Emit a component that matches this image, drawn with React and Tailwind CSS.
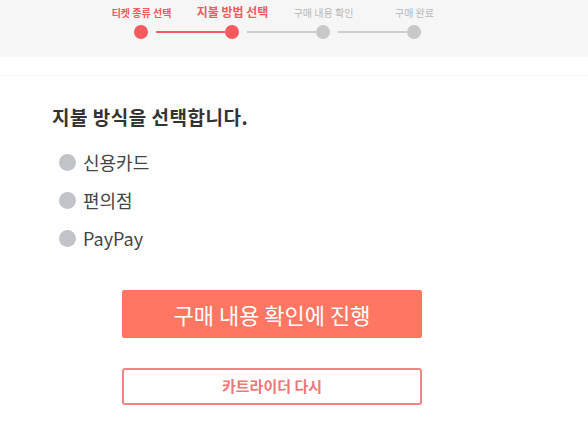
import React, { useState } from "react";

const steps = [
    { label: "티켓 종류 선택", state: "done" },
    { label: "지불 방법 선택", state: "current" },
    { label: "구매 내용 확인", state: "todo" },
    { label: "구매 완료", state: "todo" },
];

const methods = ["신용카드", "편의점", "PayPay"];

const Stepper = () => (
    <div className="h-[57px] bg-[#f6f6f6] pl-[96px] pt-[3px]">
        <div className="flex">
            {steps.map((step) => (
                <div key={step.label} className="w-[91px] h-[18px] flex items-center justify-center">
                    <span
                        className={
                            step.state === "current"
                                ? "text-[12px] font-bold text-[#f25a5f]"
                                : step.state === "done"
                                ? "text-[10px] font-semibold text-[#f25a5f]"
                                : "text-[10px] text-[#b8b8b8]"
                        }
                    >
                        {step.label}
                    </span>
                </div>
            ))}
        </div>
        <div className="flex items-center mt-[4px] pl-[38px]">
            {steps.map((step, i) => (
                <div key={step.label} className="flex items-center">
                    <div
                        className={
                            "w-[14px] h-[14px] rounded-full " +
                            (step.state === "todo" ? "bg-[#c8c8c8]" : "bg-[#f55a5e]")
                        }
                    />
                    {i < steps.length - 1 && (
                        <div
                            className={
                                "ml-[8px] w-[69px] h-[2px] " +
                                (steps[i + 1].state === "todo" ? "bg-[#cccccc]" : "bg-[#f55a5e]")
                            }
                        />
                    )}
                </div>
            ))}
        </div>
    </div>
);

export default function App() {
    const [method, setMethod] = useState(null);

    return (
        <div
            className="w-[588px] h-[427px] bg-white overflow-hidden"
            style={{ fontFamily: '"Noto Sans CJK KR", "Noto Sans", sans-serif' }}
        >
            <Stepper />
            <div className="h-[19px] border-b border-[#f6f6f6]" />
            <div className="px-[52px] pt-[28px]">
                <h2 className="text-[19px] leading-[26px] font-bold tracking-[0.5px] text-[#333333]">지불 방식을 선택합니다.</h2>
                <div className="mt-[22px] pl-[7px] flex flex-col gap-[17px]">
                    {methods.map((m) => (
                        <button
                            key={m}
                            type="button"
                            onClick={() => setMethod(m)}
                            className="flex items-center gap-[7px] h-[21px] text-left"
                        >
                            <span
                                className={
                                    "w-[17px] h-[17px] rounded-full " +
                                    (method === m ? "bg-[#ff7763]" : "bg-[#c0c4c8]")
                                }
                            />
                            <span className="text-[18px] leading-[21px] text-[#444444]">{m}</span>
                        </button>
                    ))}
                </div>
            </div>
            <div className="flex flex-col pl-[122px] mt-[41px]">
                <button
                    type="button"
                    className="w-[300px] h-[48px] rounded-[2px] bg-[#ff7763] text-white text-[22px]"
                >
                    구매 내용 확인에 진행
                </button>
                <button
                    type="button"
                    className="mt-[30px] w-[300px] h-[37px] rounded-[3px] border-2 border-[#f08585] text-[#ee7777] text-[15px] font-semibold"
                >
                    카트라이더 다시
                </button>
            </div>
        </div>
    );
}
